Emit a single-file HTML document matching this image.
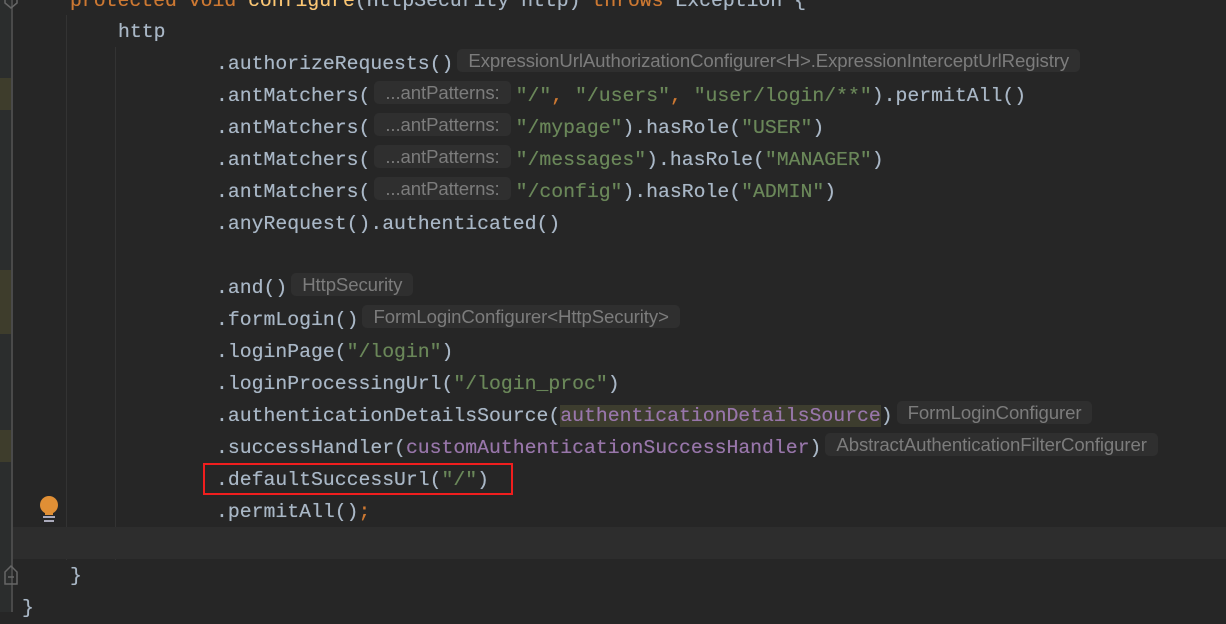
<!DOCTYPE html>
<html><head><style>
body{margin:0;width:1226px;height:612px;overflow:hidden;background:#262626;position:relative;font-family:"Liberation Mono",monospace;}
.g{position:absolute;left:0;top:0;width:11px;height:612px;background:#2b2d2d;}
.gl{position:absolute;left:11px;top:0;width:2px;height:612px;background:#4a4a4a;}
.mk{position:absolute;left:0;width:11px;background:#3e3d2c;}
.ig{position:absolute;width:1px;background:#333;}
.cur{position:absolute;left:13px;top:527px;width:1213px;height:32px;background:#2d2d2d;}
.l{position:absolute;font-size:19.8px;line-height:32px;height:32px;color:#a9b7c6;white-space:pre;text-shadow:0 0 0.4px #a9b7c6;}
.s{color:#6a8759;text-shadow:0 0 0.4px #6a8759}.o{color:#cc7832;text-shadow:0 0 0.4px #cc7832}.p{color:#9876aa;text-shadow:0 0 0.4px #9876aa}
.h{display:inline-block;font-family:"Liberation Sans",sans-serif;font-size:18.6px;line-height:23px;color:#7c7c7c;background:#2f2f2f;border-radius:5px;padding:0 11px;margin:0 5px 0 4px;vertical-align:2px;letter-spacing:-0.1px;text-shadow:none}
.hl{background:#3d3d2e}
.box{position:absolute;left:203px;top:463px;width:306px;height:28px;border:2.5px solid #f01e1e;}
</style></head><body>
<div class="g"></div><div class="gl"></div>
<div class="mk" style="top:78px;height:32px"></div>
<div class="mk" style="top:270px;height:64px"></div>
<div class="mk" style="top:430px;height:32px"></div>
<div class="ig" style="left:66px;top:15px;height:545px"></div>
<div class="ig" style="left:115px;top:47px;height:513px"></div>
<div class="cur"></div>
<div class="l" style="left:70px;top:-15px"><span class="o">protected void </span><span style="color:#ffc66d">configure</span>(HttpSecurity http) <span class="o">throws</span> Exception {</div>
<div class="l" style="left:118px;top:16px">http</div>
<div class="l" style="left:216px;top:48px">.authorizeRequests()<span class="h">ExpressionUrlAuthorizationConfigurer&lt;H&gt;.ExpressionInterceptUrlRegistry</span></div>
<div class="l" style="left:216px;top:80px">.antMatchers(<span class="h">...antPatterns:</span><span class="s">"/"</span><span class="o">, </span><span class="s">"/users"</span><span class="o">, </span><span class="s">"user/login/**"</span>).permitAll()</div>
<div class="l" style="left:216px;top:112px">.antMatchers(<span class="h">...antPatterns:</span><span class="s">"/mypage"</span>).hasRole(<span class="s">"USER"</span>)</div>
<div class="l" style="left:216px;top:144px">.antMatchers(<span class="h">...antPatterns:</span><span class="s">"/messages"</span>).hasRole(<span class="s">"MANAGER"</span>)</div>
<div class="l" style="left:216px;top:176px">.antMatchers(<span class="h">...antPatterns:</span><span class="s">"/config"</span>).hasRole(<span class="s">"ADMIN"</span>)</div>
<div class="l" style="left:216px;top:208px">.anyRequest().authenticated()</div>
<div class="l" style="left:216px;top:272px">.and()<span class="h">HttpSecurity</span></div>
<div class="l" style="left:216px;top:304px">.formLogin()<span class="h">FormLoginConfigurer&lt;HttpSecurity&gt;</span></div>
<div class="l" style="left:216px;top:336px">.loginPage(<span class="s">"/login"</span>)</div>
<div class="l" style="left:216px;top:368px">.loginProcessingUrl(<span class="s">"/login_proc"</span>)</div>
<div class="l" style="left:216px;top:400px">.authenticationDetailsSource(<span class="p hl">authenticationDetailsSource</span>)<span class="h">FormLoginConfigurer</span></div>
<div class="l" style="left:216px;top:432px">.successHandler(<span class="p">customAuthenticationSuccessHandler</span>)<span class="h">AbstractAuthenticationFilterConfigurer</span></div>
<div class="l" style="left:216px;top:464px">.defaultSuccessUrl(<span class="s">"/"</span>)</div>
<div class="l" style="left:216px;top:496px">.permitAll()<span class="o">;</span></div>
<div class="l" style="left:70px;top:560px">}</div>
<div class="l" style="left:22px;top:592px">}</div>
<div class="box"></div>
<svg style="position:absolute;left:36px;top:495px" width="26" height="30"><circle cx="13" cy="10" r="9" fill="#e08f35"/><rect x="9" y="14" width="8" height="6" fill="#e08f35"/><rect x="7" y="21" width="12" height="2" fill="#aab"/><rect x="8" y="25" width="10" height="2" fill="#aab"/></svg>
<svg style="position:absolute;left:3px;top:564px" width="16" height="22"><path d="M2 8 L8 2 L14 8 L14 20 L2 20 Z" fill="none" stroke="#666" stroke-width="1.5"/><line x1="5" y1="13" x2="11" y2="13" stroke="#666" stroke-width="1.5"/></svg>
<svg style="position:absolute;left:3px;top:0" width="16" height="10"><path d="M2 0 L2 3 L8 8 L14 3 L14 0" fill="none" stroke="#666" stroke-width="1.5"/></svg>
</body></html>
